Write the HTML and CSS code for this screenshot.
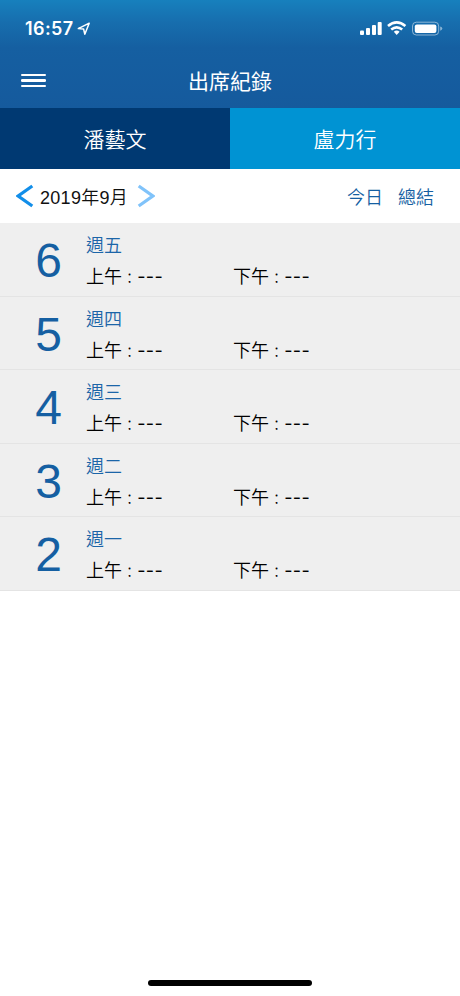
FILE: index.html
```html
<!DOCTYPE html>
<html lang="zh-Hant">
<head>
<meta charset="utf-8">
<title>出席紀錄</title>
<link rel="stylesheet" href="styles.css">
</head>
<body>
<div class="app">
  <header class="header">
    <div class="status">
      <span class="time">16:57</span>
      <svg class="location" width="14" height="14" viewBox="0 0 14 14"><path d="M12.2 1.2 L1.3 6.6 L6.6 7 L7.8 12.2 Z"/></svg>
      <svg class="indicators" width="84" height="16" viewBox="0 0 84 16">
        <g fill="#fff">
          <rect x="0" y="9.5" width="4" height="4.5" rx="1"/>
          <rect x="6" y="7" width="4" height="7" rx="1"/>
          <rect x="12" y="4" width="4" height="10" rx="1"/>
          <rect x="17.7" y="1" width="4" height="13" rx="1"/>
        </g>
        <path class="wave" d="M28 5.1 Q36.7 -2.3 45.4 5.1 M31.2 8.6 Q36.7 4 42.2 8.6"/>
        <path fill="#fff" d="M33.8 10.7 Q36.7 8.5 39.6 10.7 L36.7 14 Z"/>
        <rect class="shell" x="52.5" y="1.2" width="26.2" height="12.8" rx="3.8"/>
        <rect x="54.8" y="3.4" width="21.6" height="8.6" rx="2" fill="#fff"/>
        <path class="cap" d="M80.2 5.5 Q82.3 6.2 82.3 7.6 Q82.3 9 80.2 9.7 Z"/>
      </svg>
    </div>
    <div class="nav">
      <div class="menu"><i></i><i></i><i></i></div>
      <h1>出席紀錄</h1>
    </div>
  </header>
  <nav class="tabs">
    <div class="tab active">潘藝文</div>
    <div class="tab">盧力行</div>
  </nav>
  <div class="toolbar">
    <svg class="arrow" width="18" height="24" viewBox="0 0 18 24"><path d="M16.3 2 L2.2 12 L16.3 22"/></svg>
    <span class="month">2019年9月</span>
    <svg class="arrow next" width="18" height="24" viewBox="0 0 18 24"><path d="M1.7 2 L15.8 12 L1.7 22"/></svg>
    <span class="link today">今日</span>
    <span class="link">總結</span>
  </div>
  <main>
    <section class="row"><div class="day">6</div><div class="info"><div class="week">週五</div><div class="slots"><span>上午 : <b>---</b></span><span>下午 : <b>---</b></span></div></div></section>
    <section class="row"><div class="day">5</div><div class="info"><div class="week">週四</div><div class="slots"><span>上午 : <b>---</b></span><span>下午 : <b>---</b></span></div></div></section>
    <section class="row"><div class="day">4</div><div class="info"><div class="week">週三</div><div class="slots"><span>上午 : <b>---</b></span><span>下午 : <b>---</b></span></div></div></section>
    <section class="row"><div class="day">3</div><div class="info"><div class="week">週二</div><div class="slots"><span>上午 : <b>---</b></span><span>下午 : <b>---</b></span></div></div></section>
    <section class="row"><div class="day">2</div><div class="info"><div class="week">週一</div><div class="slots"><span>上午 : <b>---</b></span><span>下午 : <b>---</b></span></div></div></section>
  </main>
  <div class="home"></div>
</div>
</body>
</html>
```
FILE: styles.css
```css
* { box-sizing: border-box; }
body { margin: 0; background: #fff; color: #111; font-family: Inter, "Noto Sans CJK TC", sans-serif; }
.app { width: 460px; height: 996px; display: flex; flex-direction: column; overflow: hidden; }
.header { height: 108px; background: linear-gradient(#1780bd 0, #176eae 22px, #155fa1 48px, #155a9d 100%); color: #fff; }
.status { height: 54px; padding: 3px 16px 0 25px; display: flex; align-items: center; }
.time { font-size: 18px; font-weight: 600; letter-spacing: 0.4px; line-height: 24px; }
.location { margin-left: 3px; fill: none; stroke: #fff; stroke-width: 1.5; stroke-linejoin: round; }
.indicators { margin-left: auto; }
.wave { fill: none; stroke: #fff; stroke-width: 2.6; }
.shell { fill: none; stroke: #fff; stroke-opacity: .5; stroke-width: 1; }
.cap { fill: #fff; fill-opacity: .5; }
.nav { height: 54px; display: grid; grid-template-columns: 60px 1fr 60px; align-items: center; }
.menu { margin: 0 0 1px 21px; width: 25px; display: flex; flex-direction: column; gap: 3px; }
.menu i { height: 2.6px; border-radius: 1.3px; background: #fff; }
.nav h1 { margin: 2px 0 0; text-align: center; font-size: 21px; line-height: 30px; font-weight: 400; }
.tabs { height: 61px; display: grid; grid-template-columns: 1fr 1fr; color: #fff; font-size: 21px; font-weight: 350; line-height: 63px; text-align: center; }
.tab { height: 61px; background: #0093d3; }
.tab.active { background: #003972; }
.toolbar { height: 54px; padding: 0 26px 0 16px; display: flex; align-items: center; font-size: 18px; font-weight: 350; }
.arrow { fill: none; stroke: #128ee9; stroke-width: 3.2; }
.arrow.next { stroke: #80c3fa; }
.month { width: 91px; margin: 0 6px; white-space: nowrap; font-family: "Liberation Sans", "Noto Sans CJK TC", sans-serif; letter-spacing: 0.3px; }
.link { color: #155fa2; }
.today { margin-left: auto; margin-right: 15px; }
.row { height: 73.5px; background: #efefef; border-bottom: 1px solid #e4e4e4; display: flex; }
.day { width: 86px; padding-left: 11px; text-align: center; font-family: "Liberation Sans", sans-serif; font-size: 48px; line-height: 76px; color: #155fa2; }
.info { flex: 1; padding-top: 8px; font-size: 18px; font-weight: 350; }
.week { line-height: 30px; color: #1b65a8; }
.slots { display: flex; line-height: 32px; color: #000; }
.slots span { width: 147px; }
.slots b { font-weight: 400; letter-spacing: 0.3px; }
.home { width: 164px; height: 6px; border-radius: 3px; background: #000; margin: auto auto 10px; }
```
